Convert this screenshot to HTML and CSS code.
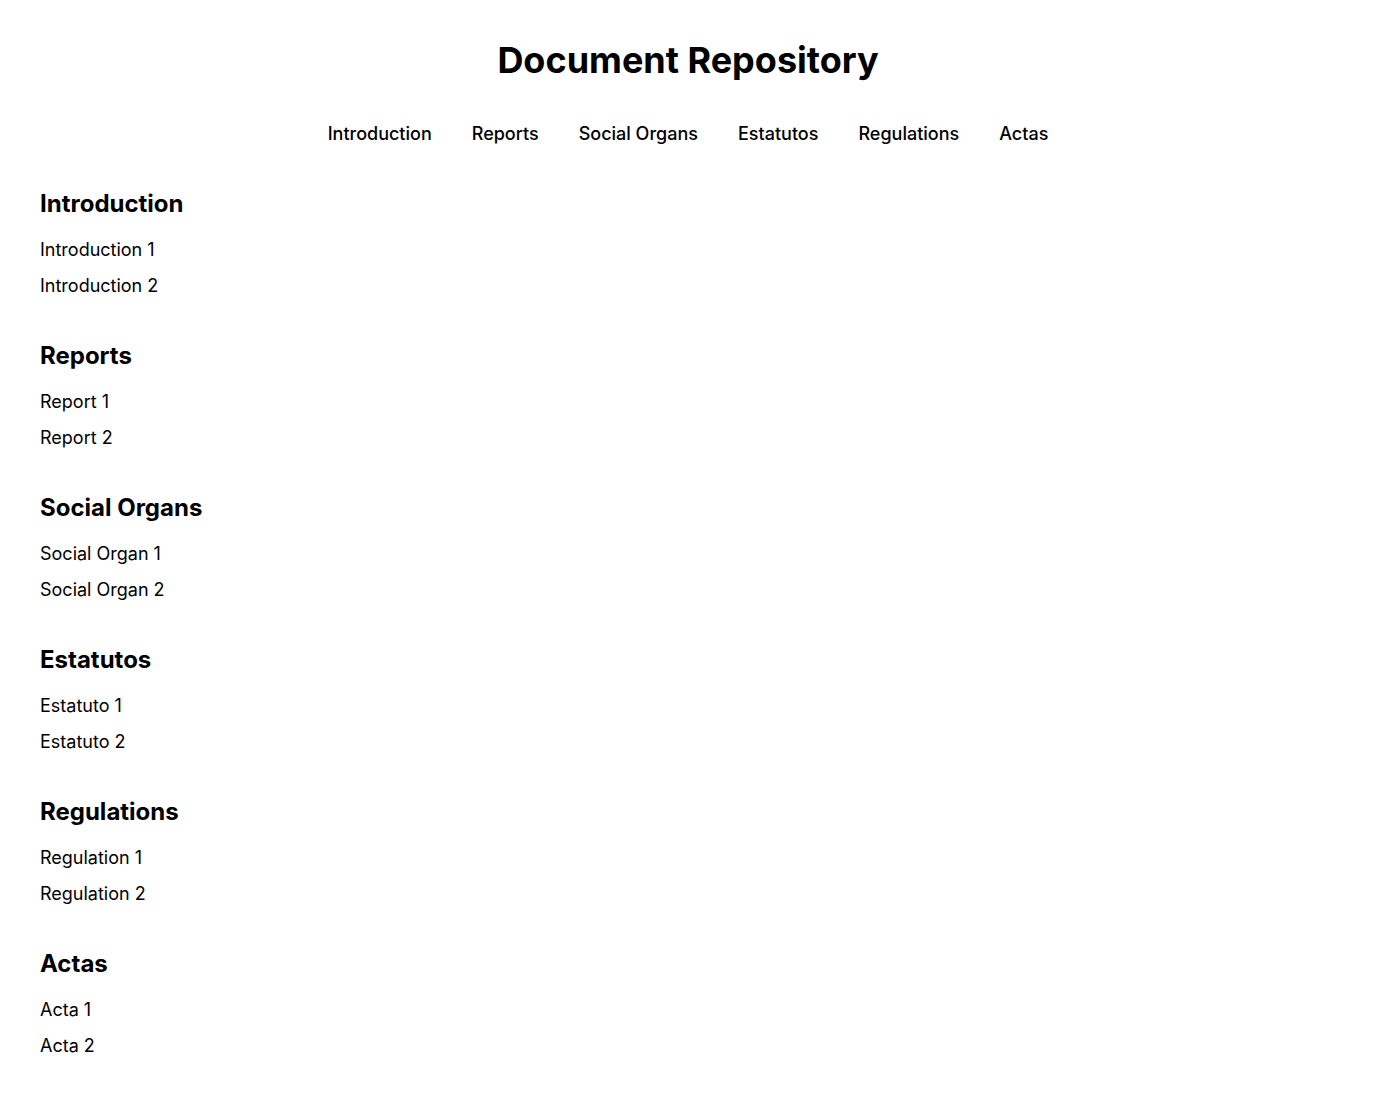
FILE: index.html
```html
<!DOCTYPE html>
<html lang="en">
<head>
<meta charset="utf-8">
<title>Document Repository</title>
<link rel="stylesheet" href="styles.css">
</head>
<body>
<header class="header">
  <h1 class="title">Document Repository</h1>
  <nav class="nav">
    <a class="nav-link" href="#introduction">Introduction</a>
    <a class="nav-link" href="#reports">Reports</a>
    <a class="nav-link" href="#social-organs">Social Organs</a>
    <a class="nav-link" href="#estatutos">Estatutos</a>
    <a class="nav-link" href="#regulations">Regulations</a>
    <a class="nav-link" href="#actas">Actas</a>
  </nav>
</header>
<main class="content">
  <section class="section" id="introduction">
    <h2 class="section-title">Introduction</h2>
    <ul class="doc-list"><li class="doc">Introduction 1</li><li class="doc">Introduction 2</li></ul>
  </section>
  <section class="section" id="reports">
    <h2 class="section-title">Reports</h2>
    <ul class="doc-list"><li class="doc">Report 1</li><li class="doc">Report 2</li></ul>
  </section>
  <section class="section" id="social-organs">
    <h2 class="section-title">Social Organs</h2>
    <ul class="doc-list"><li class="doc">Social Organ 1</li><li class="doc">Social Organ 2</li></ul>
  </section>
  <section class="section" id="estatutos">
    <h2 class="section-title">Estatutos</h2>
    <ul class="doc-list"><li class="doc">Estatuto 1</li><li class="doc">Estatuto 2</li></ul>
  </section>
  <section class="section" id="regulations">
    <h2 class="section-title">Regulations</h2>
    <ul class="doc-list"><li class="doc">Regulation 1</li><li class="doc">Regulation 2</li></ul>
  </section>
  <section class="section" id="actas">
    <h2 class="section-title">Actas</h2>
    <ul class="doc-list"><li class="doc">Acta 1</li><li class="doc">Acta 2</li></ul>
  </section>
</main>
</body>
</html>
```
FILE: styles.css
```css
html, body {
  margin: 0;
  padding: 0;
  background: #fff;
}
body {
  font-family: Inter, "Noto Sans", sans-serif;
  color: #000;
}
.header {
  padding-top: 38px;
  display: flex;
  flex-direction: column;
  align-items: center;
}
.title {
  margin: 0;
  font-size: 36px;
  line-height: 44px;
  font-weight: 700;
}
.nav {
  margin-top: 38px;
  display: flex;
  gap: 40px;
}
.nav-link {
  font-size: 18px;
  line-height: 28px;
  font-weight: 500;
  color: #000;
  text-decoration: none;
}
.content {
  padding: 40px 40px 36px;
  display: flex;
  flex-direction: column;
  gap: 36px;
}
.section-title {
  margin: 0 0 12px;
  font-size: 24px;
  line-height: 32px;
  font-weight: 700;
}
.doc-list {
  margin: 0;
  padding: 0;
  list-style: none;
}
.doc {
  font-size: 18px;
  line-height: 36px;
}
```
